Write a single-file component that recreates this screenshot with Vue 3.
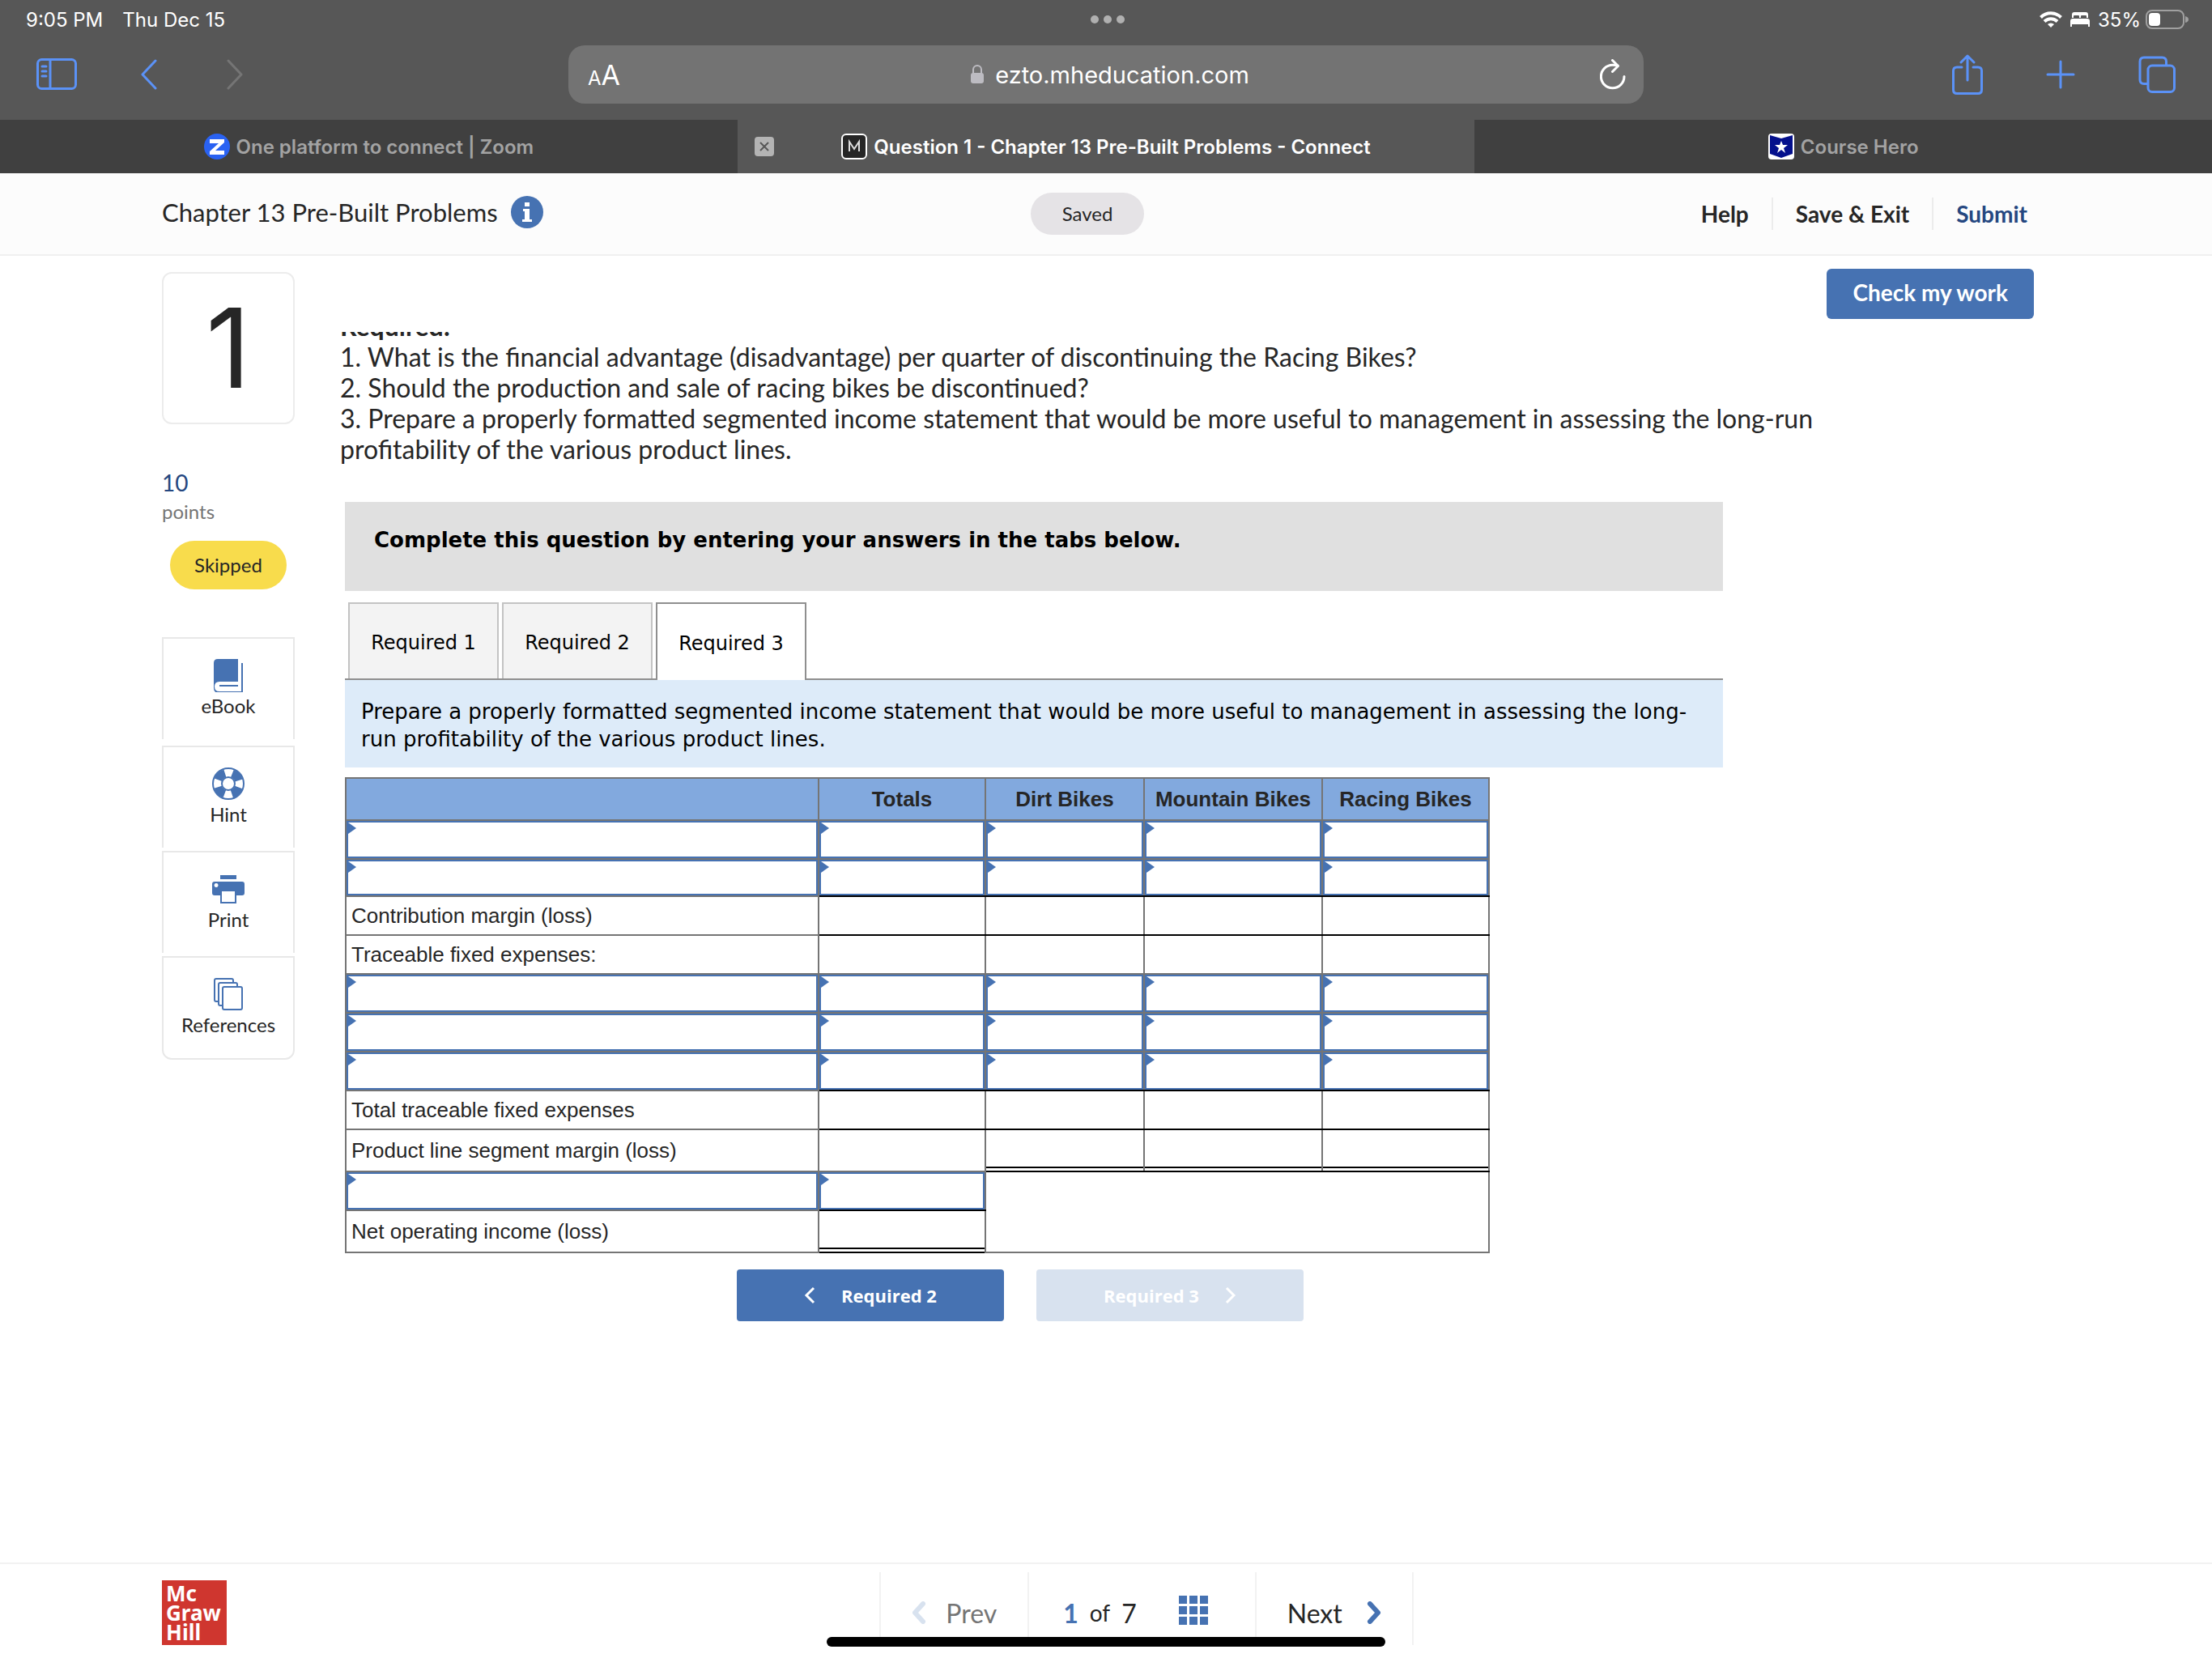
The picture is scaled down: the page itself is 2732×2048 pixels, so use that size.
<script setup>
import { ref } from 'vue'

const browserTabs = [
    { title: "One platform to connect | Zoom", icon: "zoom" },
    { title: "Question 1 - Chapter 13 Pre-Built Problems - Connect", icon: "connect", active: true },
    { title: "Course Hero", icon: "hero" }
];

const tools = ["eBook", "Hint", "Print", "References"];
const tabs = ["Required 1", "Required 2", "Required 3"];
const activeTab = ref("Required 3");

const columns = ["Totals", "Dirt Bikes", "Mountain Bikes", "Racing Bikes"];

// line: rule under the value cells
const rows = ref([
    { entry: true },
    { entry: true, line: "single", short: true },
    { label: "Contribution margin (loss)", line: "single" },
    { label: "Traceable fixed expenses:" },
    { entry: true },
    { entry: true },
    { entry: true, line: "single" },
    { label: "Total traceable fixed expenses", line: "single" },
    { label: "Product line segment margin (loss)", line: "double", tall: true },
    { entry: true, line: "single", totalOnly: true },
    { label: "Net operating income (loss)", line: "double", tall: true, totalOnly: true }
]);

function valueColumns(row)
{
    return row.totalOnly ? columns.slice(0, 1) : columns;
}

function lineClass(row, i)
{
    // product lines get the double rule, their total does not
    if (row.line === "double" && !row.totalOnly && i === 0) return "";
    return row.line ? "line-" + row.line : "";
}
</script>

<template>
<div id="screen">
    <div id="browser">
        <div id="status-bar">
            <div class="status-left"><span>9:05 PM</span><span>Thu Dec 15</span></div>
            <svg class="dots" viewBox="0 0 42 10"><circle cx="5" cy="5" r="5" /><circle cx="21" cy="5" r="5" /><circle cx="37" cy="5" r="5" /></svg>
            <div class="status-right">
                <svg width="28" height="20" viewBox="0 0 28 20" fill="none" stroke="#fff" stroke-width="4">
                    <path d="M1.5 7.5a17.5 17.5 0 0 1 25 0M6 12.5a11.5 11.5 0 0 1 16 0" />
                    <path d="M14 20l-4-4a5.8 5.8 0 0 1 8 0z" fill="#fff" stroke="none" />
                </svg>
                <svg class="bed" width="24" height="18" viewBox="0 0 24 18" fill="#fff">
                    <path d="M2 7V3a3 3 0 0 1 3-3h14a3 3 0 0 1 3 3v4h-2V5q0-1-1-1h-5q-1 0-1 1v2h-2V5q0-1-1-1H5Q4 4 4 5v2z" />
                    <path d="M0 18v-7q0-3 3-3h18q3 0 3 3v7h-2v-3H2v3z" />
                </svg>
                <span>35%</span>
                <svg width="54" height="24" viewBox="0 0 54 24">
                    <rect x="1" y="1" width="46" height="22" rx="7" fill="none" stroke="#a0a0a0" stroke-width="2" />
                    <rect x="4" y="4" width="14" height="16" rx="4" fill="#fff" />
                    <path d="M49 8q4 1 4 4t-4 4z" fill="#a0a0a0" />
                </svg>
            </div>
        </div>

        <div id="toolbar">
            <div class="tool-left">
                <button aria-label="Show sidebar">
                    <svg width="50" height="40" viewBox="0 0 50 40" fill="none" stroke="#5b92f7" stroke-width="3" stroke-linecap="round">
                        <rect x="1.5" y="1.5" width="47" height="36" rx="5" /><path d="M17 2v35M7 10h5M7 16h5M7 22h5" />
                    </svg>
                </button>
                <button aria-label="Back">
                    <svg width="22" height="38" viewBox="0 0 22 38" fill="none" stroke="#5b92f7" stroke-width="3" stroke-linecap="round" stroke-linejoin="round"><path d="M19 2L3 19l16 17" /></svg>
                </button>
                <button aria-label="Forward">
                    <svg width="22" height="38" viewBox="0 0 22 38" fill="none" stroke="#757575" stroke-width="3" stroke-linecap="round" stroke-linejoin="round"><path d="M3 2l16 17L3 36" /></svg>
                </button>
            </div>
            <div id="address">
                <button class="reader" aria-label="Page settings"><small>A</small>A</button>
                <div class="url">
                    <svg width="16" height="24" viewBox="0 0 16 24"><path d="M3 11V6a5 5 0 0 1 10 0v5" fill="none" stroke="#bdbcc2" stroke-width="2" /><rect y="10" width="16" height="13" rx="3" fill="#bdbcc2" /></svg>
                    <span>ezto.mheducation.com</span>
                </div>
                <button aria-label="Reload">
                    <svg width="32" height="38" viewBox="0 0 32 38" fill="none" stroke="#fff" stroke-width="3" stroke-linecap="round" stroke-linejoin="round"><path d="M30 21.500a14.300 14.300 0 1 1-14.300-14.300q3.500 0 6.500.8M15.500 1.500l7 7-7 7" /></svg>
                </button>
            </div>
            <div class="tool-right">
                <button aria-label="Share">
                    <svg width="38" height="50" viewBox="0 0 38 50" fill="none" stroke="#5b92f7" stroke-width="3" stroke-linecap="round" stroke-linejoin="round"><path d="M12 16H6q-4.500 0-4.500 4.500V44q0 4.500 4.500 4.500h26q4.500 0 4.500-4.500V20.500Q36.500 16 32 16h-6M19 32V2M11 10l8-8 8 8" /></svg>
                </button>
                <button aria-label="New tab">
                    <svg width="36" height="36" viewBox="0 0 36 36" stroke="#5b92f7" stroke-width="3" stroke-linecap="round"><path d="M18 2v32M2 18h32" /></svg>
                </button>
                <button aria-label="All tabs">
                    <svg width="46" height="46" viewBox="0 0 46 46" fill="none" stroke="#5b92f7" stroke-width="3"><rect x="12" y="12" width="32.500" height="32.500" rx="5" /><path d="M12 34.500H7q-5 0-5-5V7q0-5 5-5h22.500q5 0 5 5v5" /></svg>
                </button>
            </div>
        </div>

        <div id="browser-tabs">
            <div v-for="tab in browserTabs" :key="tab.title" class="browser-tab" :class="{ active: tab.active }">
                <button v-if="tab.active" class="close" aria-label="Close tab">
                    <svg width="24" height="24" viewBox="0 0 24 24"><rect width="24" height="24" rx="4" fill="#b4b4b4" /><path d="M7 7l10 10M17 7L7 17" stroke="#575757" stroke-width="2" /></svg>
                </button>
                <svg v-if="tab.icon === 'zoom'" width="32" height="32" viewBox="0 0 32 32"><circle cx="16" cy="16" r="16" fill="#2a62f2" /><path d="M7 7h18v4L14 21h11v5H7v-4l11-10H7z" fill="#fff" /></svg>
                <svg v-else-if="tab.icon === 'connect'" width="32" height="32" viewBox="0 0 32 32"><rect x="1" y="1" width="30" height="30" rx="5" fill="#262626" stroke="#fff" stroke-width="2" /><path d="M10 22V10l6 9 6-9v12" fill="none" stroke="#ddd" stroke-width="2" /></svg>
                <svg v-else width="32" height="32" viewBox="0 0 32 32"><rect width="32" height="32" rx="4" fill="#fff" /><path d="M2 2l14 4 14-4v23l-14 5-14-5z" fill="#04108c" /><path d="M16 9l2 5h6l-5 4 2 6-5-4-5 4 2-6-5-4h6z" fill="#fff" /></svg>
                <span>{{ tab.title }}</span>
            </div>
        </div>
    </div>

    <header id="assignment-bar">
        <div class="assignment-title">
            <span>Chapter 13 Pre-Built Problems</span>
            <button aria-label="Assignment information">
                <svg width="40" height="40" viewBox="0 0 40 40"><circle cx="20" cy="20" r="20" fill="#4672b2" /><path d="M17 8h6v5h-6zM15 16h8v13h3v3H14v-3h3V19h-2z" fill="#fff" /></svg>
            </button>
        </div>
        <div class="saved">Saved</div>
        <nav class="assignment-links">
            <a href="#">Help</a>
            <a href="#">Save &amp; Exit</a>
            <a href="#" class="submit">Submit</a>
        </nav>
    </header>

    <main>
        <aside>
            <div class="number">1</div>
            <div class="points"><b>10</b><span>points</span></div>
            <div class="skipped">Skipped</div>
            <div class="tools">
                <button v-for="tool in tools" :key="tool">
                    <svg v-if="tool === 'eBook'" width="40" height="42" viewBox="0 0 40 42">
                        <path d="M7 1h25v28H9q-6 0-6 6t6 6h27V6h2v37H8q-6 0-6-6V6q0-5 5-5z" fill="#4672b2" /><path d="M9 33h23v2H9z" fill="#4672b2" />
                    </svg>
                    <svg v-else-if="tool === 'Hint'" width="40" height="42" viewBox="0 0 40 42" fill="none" stroke="#4672b2">
                        <circle cx="20" cy="21" r="19" stroke-width="2" /><circle cx="20" cy="21" r="8" stroke-width="2" /><circle cx="20" cy="21" r="13.500" stroke-width="10" stroke-dasharray="12 9.200" stroke-dashoffset="-4.600" />
                    </svg>
                    <svg v-else-if="tool === 'Print'" width="40" height="42" viewBox="0 0 40 42" fill="#4672b2">
                        <path d="M10 4h20v5H10z" /><path fill-rule="evenodd" d="M3 12h34q3 0 3 3v11q0 3-3 3h-7v10H10V29H3q-3 0-3-3V15q0-3 3-3zm9 12v13h16V24zM5 14a2.500 2.500 0 1 0 .1 0z" />
                    </svg>
                    <svg v-else width="40" height="42" viewBox="0 0 40 42" fill="#fff" stroke="#4672b2" stroke-width="2">
                        <rect x="3" y="2" width="23" height="28" rx="2" /><rect x="8" y="7" width="23" height="28" rx="2" /><rect x="13" y="12" width="24" height="28" rx="2" />
                    </svg>
                    <span>{{ tool }}</span>
                </button>
            </div>
        </aside>

        <section id="question">
            <button class="check">Check my work</button>
            <div class="prompt">
                <div class="prompt-text">
                    <b>Required:</b><br />
                    1. What is the financial advantage (disadvantage) per quarter of discontinuing the Racing Bikes?<br />
                    2. Should the production and sale of racing bikes be discontinued?<br />
                    3. Prepare a properly formatted segmented income statement that would be more useful to management in assessing the long-run profitability of the various product lines.
                </div>
            </div>

            <div id="worksheet">
                <div class="instruction">Complete this question by entering your answers in the tabs below.</div>
                <div class="tabs" role="tablist">
                    <button v-for="tab in tabs" :key="tab" role="tab" :aria-selected="tab === activeTab" :class="{ active: tab === activeTab }" @click="activeTab = tab">{{ tab }}</button>
                </div>
                <div class="tab-text">Prepare a properly formatted segmented income statement that would be more useful to management in assessing the long-run profitability of the various product lines.</div>

                <table>
                    <colgroup><col /><col class="col-total" /><col class="col-dirt" /><col class="col-mountain" /><col class="col-total" /></colgroup>
                    <thead>
                        <tr><th></th><th v-for="col in columns" :key="col" scope="col">{{ col }}</th></tr>
                    </thead>
                    <tbody>
                        <tr v-for="(row, r) in rows" :key="r" :class="{ short: row.short, tall: row.tall }">
                            <td v-if="row.entry" class="entry"><input type="text" :aria-label="'Row ' + (r + 1) + ' description'" /></td>
                            <td v-else>{{ row.label }}</td>
                            <td v-for="(col, i) in valueColumns(row)" :key="col" :class="[lineClass(row, i), { entry: row.entry }]">
                                <input v-if="row.entry" type="text" :aria-label="'Row ' + (r + 1) + ' ' + col" />
                            </td>
                            <td v-if="row.totalOnly && row.entry" colspan="3" rowspan="2"></td>
                        </tr>
                    </tbody>
                </table>

                <div class="steps">
                    <button>
                        <svg width="14" height="22" viewBox="0 0 14 22" fill="none" stroke="#fff" stroke-width="3"><path d="M12 2L3 11l9 9" /></svg>
                        Required 2
                    </button>
                    <button disabled>
                        Required 3
                        <svg width="14" height="22" viewBox="0 0 14 22" fill="none" stroke="#fff" stroke-width="3"><path d="M2 2l9 9-9 9" /></svg>
                    </button>
                </div>
            </div>
        </section>
    </main>

    <footer>
        <div class="logo">Mc<br />Graw<br />Hill</div>
        <nav class="pager">
            <button class="prev" disabled>
                <svg width="18" height="28" viewBox="0 0 18 28" fill="none" stroke="#d8e2ef" stroke-width="6" stroke-linecap="round" stroke-linejoin="round"><path d="M14 3L4 14l10 11" /></svg>
                Prev
            </button>
            <div class="position">
                <b>1</b><small>of</small><span>7</span>
                <button aria-label="Question list">
                    <svg width="36" height="36" viewBox="0 0 36 36" fill="#4672b2"><path d="M0 0h10v10H0zM13 0h10v10H13zM26 0h10v10H26zM0 13h10v10H0zM13 13h10v10H13zM26 13h10v10H26zM0 26h10v10H0zM13 26h10v10H13zM26 26h10v10H26z" /></svg>
                </button>
            </div>
            <button class="next">
                Next
                <svg width="18" height="28" viewBox="0 0 18 28" fill="none" stroke="#4672b2" stroke-width="6" stroke-linecap="round" stroke-linejoin="round"><path d="M4 3l10 11L4 25" /></svg>
            </button>
        </nav>
        <div class="home-bar"></div>
    </footer>
</div>
</template>

<style>
body {
    margin: 0;
    background-color: #fff;
}
</style>

<style scoped>
* {
    box-sizing: border-box;
}

button {
    padding: 0;
    border: 0;
    background: none;
    color: inherit;
    font: inherit;
}

svg {
    display: block;
    flex: none;
}

#screen {
    display: flex;
    flex-direction: column;
    min-height: 100vh;
    color: #262626;
    font-family: Lato, sans-serif;
}

/* Browser */

#browser {
    background-color: #575757;
    color: #fff;
    font-family: Inter, sans-serif;
}

#status-bar {
    display: grid;
    grid-template-columns: 1fr 42px 1fr;
    align-items: center;
    height: 48px;
    padding: 0 28px 0 32px;
    font-size: 24px;
}

.status-left {
    display: flex;
    gap: 24px;
}

.dots {
    fill: #b0b0b0;
}

.status-right {
    display: flex;
    justify-content: flex-end;
    align-items: center;
    gap: 6px;
}

.bed {
    margin: 0 4px;
}

#toolbar {
    display: grid;
    grid-template-columns: 1fr minmax(0, 1328px) 1fr;
    align-items: center;
    height: 100px;
    padding: 0 45px 12px;
}

.tool-left,
.tool-right {
    display: flex;
    align-items: center;
    gap: 78px;
}

.tool-left button + button + button {
    margin-left: 6px;
}

.tool-right {
    justify-content: flex-end;
}

#address {
    display: flex;
    justify-content: space-between;
    align-items: center;
    height: 72px;
    padding: 0 22px 0 24px;
    border-radius: 20px;
    background-color: #737373;
}

.url {
    display: flex;
    align-items: center;
    gap: 14px;
    font-size: 29px;
}

.reader {
    font-size: 34px;
}

.reader small {
    font-size: 24px;
}

#browser-tabs {
    display: flex;
    height: 66px;
}

.browser-tab {
    position: relative;
    flex: 1;
    display: flex;
    justify-content: center;
    align-items: center;
    gap: 8px;
    background-color: #404040;
    color: #a3a3a3;
    font-size: 24px;
    font-weight: 600;
}

.browser-tab.active {
    background-color: #575757;
    color: #fff;
}

.close {
    position: absolute;
    left: 21px;
}

/* Assignment header */

#assignment-bar {
    display: grid;
    grid-template-columns: 1fr 140px 1fr;
    align-items: center;
    height: 102px;
    padding: 0 228px 0 182px;
    border-bottom: 2px solid #f0f0f0;
    background-color: #fcfcfc;
}

.assignment-title {
    display: flex;
    align-items: center;
    gap: 16px;
    padding: 0 0 4px 18px;
    font-size: 31px;
}

.saved {
    border-radius: 26px;
    background-color: #e5e3e6;
    font-size: 24px;
    line-height: 52px;
    text-align: center;
}

.assignment-links {
    display: flex;
    justify-content: flex-end;
}

.assignment-links a {
    padding: 0 28px;
    border-left: 2px solid #ececec;
    color: #262626;
    font-size: 28px;
    font-weight: bold;
    line-height: 40px;
    text-decoration: none;
}

.assignment-links a:first-child {
    border-left: 0;
}

.assignment-links .submit {
    padding-right: 0;
    color: #254780;
}

/* Question */

main {
    flex: 1;
    display: flex;
    gap: 56px;
    padding: 16px 220px 40px 200px;
}

aside {
    width: 164px;
    flex: none;
    padding-top: 4px;
}

.number {
    height: 188px;
    border: 2px solid #ececec;
    border-radius: 12px;
    font-family: Inter, sans-serif;
    font-size: 136px;
    line-height: 184px;
    text-align: center;
}

.points {
    display: flex;
    flex-direction: column;
    margin: 54px 0 18px;
    color: #757575;
    font-size: 24px;
    line-height: 36px;
}

.points b {
    color: #254780;
    font-size: 28px;
    font-weight: normal;
}

.skipped {
    margin: 0 10px;
    border-radius: 30px;
    background-color: #f8dc4c;
    font-size: 24px;
    line-height: 60px;
    text-align: center;
}

.tools {
    display: flex;
    flex-direction: column;
    gap: 4px;
    margin-top: 59px;
}

.tools button {
    display: flex;
    flex-direction: column;
    align-items: center;
    gap: 2px;
    height: 126px;
    padding-top: 24px;
    border: 2px solid #e8e8e8;
    border-bottom: 0;
    font-size: 24px;
}

.tools button:first-child {
    margin-bottom: 4px;
}

.tools button:last-child {
    height: 128px;
    border-bottom: 2px solid #e8e8e8;
    border-radius: 0 0 12px 12px;
}

#question {
    flex: 1;
    display: flex;
    flex-direction: column;
}

.check {
    align-self: flex-end;
    height: 62px;
    padding: 0 32px 4px;
    border-radius: 6px;
    background-color: #4672b2;
    color: #fff;
    font-size: 28px;
    font-weight: bold;
}

.prompt {
    overflow: hidden;
    max-width: 1860px;
    margin: 16px 0 46px;
}

/* scrolled part way through the first line */
.prompt-text {
    margin-top: -26px;
    font-size: 32px;
    line-height: 38px;
}

#worksheet {
    margin: 0 384px 0 6px;
    color: #000;
    font-family: Verdana, "DejaVu Sans", sans-serif;
    font-size: 26px;
}

.instruction {
    height: 110px;
    padding: 30px 36px;
    background-color: #e0e0e0;
    font-weight: bold;
    line-height: 34px;
}

.tabs {
    display: flex;
    gap: 4px;
    margin-top: 14px;
    padding-left: 4px;
    border-bottom: 2px solid #8f8f8f;
}

.tabs button {
    width: 186px;
    height: 94px;
    padding-top: 4px;
    border: 2px solid #c3c3c3;
    border-bottom: 0;
    background-color: #f3f3f3;
    font-size: 24px;
}

.tabs .active {
    height: 96px;
    margin-bottom: -2px;
    border-color: #8f8f8f;
    background-color: #fff;
}

.tab-text {
    padding: 22px 20px 18px;
    background-color: #ddebf9;
    line-height: 34px;
}

table {
    width: calc(100% - 288px);
    margin-top: 12px;
    border-collapse: collapse;
    table-layout: fixed;
    color: #262626;
    font-family: "Liberation Sans", Arial, sans-serif;
    font-size: 26px;
}

.col-total {
    width: 206px;
}

.col-dirt {
    width: 196px;
}

.col-mountain {
    width: 220px;
}

th {
    height: 52px;
    padding: 0;
    border: 2px solid #757575;
    background-color: #82a9de;
}

td {
    height: 48px;
    padding: 0 6px;
    border: 2px solid #757575;
}

.short td {
    height: 46px;
}

.tall td {
    height: 52px;
}

td.entry {
    position: relative;
    padding: 0;
}

.entry input {
    display: block;
    width: 100%;
    height: 46px;
    padding: 0 16px;
    border: 2px solid #4672b2;
    background: none;
    font: inherit;
}

.short input {
    height: 44px;
}

.entry::before {
    content: "";
    position: absolute;
    top: 2px;
    left: 2px;
    border-top: 7px solid transparent;
    border-bottom: 7px solid transparent;
    border-left: 10px solid #4672b2;
}

.line-single,
.line-double {
    border-bottom-color: #000;
}

.line-double {
    box-shadow: inset 0 -3px #fff, inset 0 -5px #000;
}

.steps {
    display: flex;
    justify-content: center;
    gap: 40px;
    margin-top: 20px;
    padding-right: 34px;
    font-family: "Open Sans", sans-serif;
    font-size: 22px;
    font-weight: bold;
}

.steps button {
    display: flex;
    justify-content: center;
    align-items: center;
    gap: 32px;
    width: 330px;
    height: 64px;
    border-radius: 4px;
    background-color: #4672b2;
    color: #fff;
}

.steps button:disabled {
    background-color: #d8e2ef;
}

/* Footer */

footer {
    position: relative;
    display: flex;
    height: 118px;
    padding: 10px 180px 16px 200px;
    border-top: 2px solid #f2f2f2;
}

.logo {
    width: 80px;
    height: 80px;
    margin-top: 10px;
    padding: 4px 5px;
    background-color: #cf362f;
    color: #fff;
    font-family: "Noto Sans", sans-serif;
    font-size: 26px;
    font-weight: bold;
    line-height: 24px;
}

.pager {
    display: flex;
    margin: 0 auto;
    border-right: 2px solid #f2f2f2;
    font-size: 32px;
}

.pager > * {
    display: flex;
    align-items: center;
    padding: 10px 38px 0;
    border-left: 2px solid #f2f2f2;
}

.prev {
    gap: 24px;
    color: #757575;
}

.next {
    gap: 30px;
}

.position {
    gap: 14px;
    padding-left: 42px;
}

.position b {
    color: #4672b2;
}

.position small {
    font-size: 28px;
}

.position button {
    margin: 0 20px 6px 38px;
}

.home-bar {
    position: absolute;
    bottom: 14px;
    left: 50%;
    width: 690px;
    height: 12px;
    margin-left: -345px;
    border-radius: 6px;
    background-color: #000;
}
</style>
